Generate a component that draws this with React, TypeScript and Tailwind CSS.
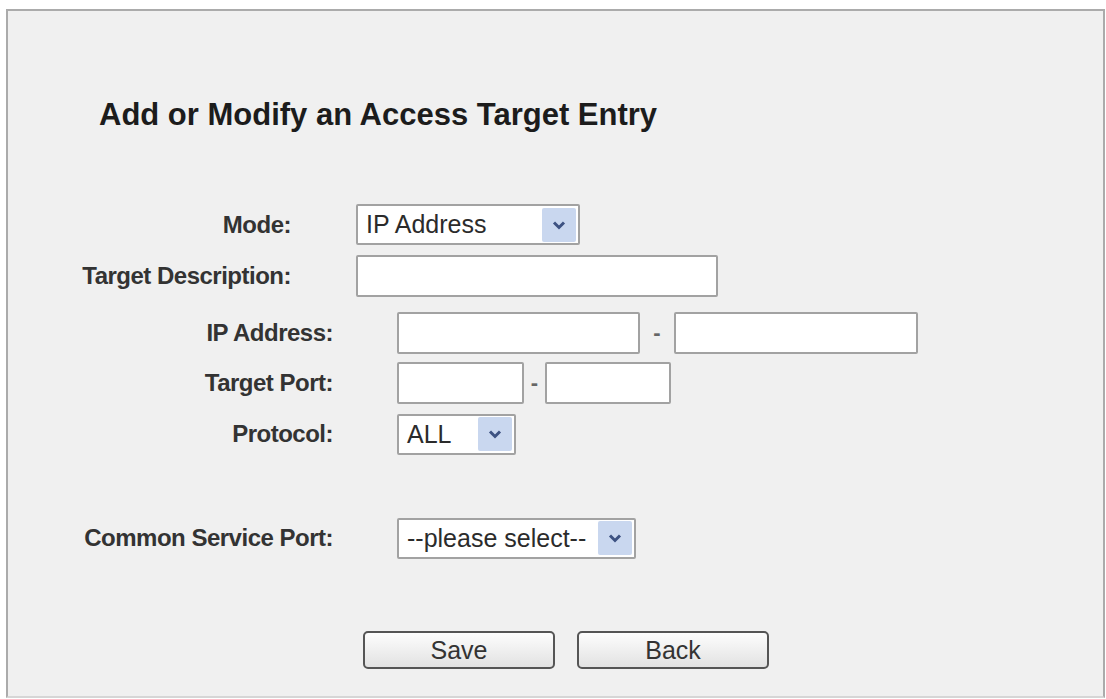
import * as React from "react";

const font = { fontFamily: '"Liberation Sans", Arial, sans-serif' };

function Chevron() {
  return (
    <svg width="14" height="10" viewBox="0 0 14 10">
      <path d="M2 2.5 L7 7.5 L12 2.5" fill="none" stroke="#3d5282" strokeWidth="3" />
    </svg>
  );
}

function Select({ value, width }: { value: string; width: string }) {
  return (
    <div
      className={`${width} h-[41px] flex items-center justify-between bg-white border-2 border-[#a2a2a2] rounded-[2px] pl-[8px] pr-[2px]`}
    >
      <span className="text-[25px] text-[#2b2b2b] leading-none">{value}</span>
      <span className="w-[34px] h-[34px] flex items-center justify-center bg-[#c9d7ef] rounded-[2px]">
        <Chevron />
      </span>
    </div>
  );
}

function TextBox({ width }: { width: string }) {
  return <div className={`${width} h-[42px] bg-white border-2 border-[#a2a2a2] rounded-[2px]`} />;
}

function Label({ text, width }: { text: string; width: string }) {
  return (
    <div className={`${width} text-right text-[24px] font-bold tracking-[-0.5px] text-[#333] leading-none`}>
      {text}
    </div>
  );
}

function Dash({ width }: { width: string }) {
  return <div className={`${width} text-center text-[22px] font-bold text-[#666] leading-none`}>-</div>;
}

function FormButton({ text }: { text: string }) {
  return (
    <button className="w-[192px] h-[38px] rounded-[5px] border-2 border-[#555] bg-gradient-to-b from-[#fdfdfd] to-[#e2e2e2] text-[25px] text-[#333] leading-none">
      {text}
    </button>
  );
}

export default function App() {
  return (
    <div className="w-[1106px] h-[699px] bg-white pt-[9px] pl-[6px] pr-[1px] pb-[1px]" style={font}>
      <div className="h-full border-2 border-[#ababab] border-b-[#d6d6d6] bg-[#f0f0f0]">
        {/* Heading */}
        <h1 className="mt-[86px] ml-[91px] text-[31px] leading-[36px] font-bold text-[#1c1c1c]">
          Add or Modify an Access Target Entry
        </h1>

        {/* Mode / description */}
        <div className="mt-[71px] flex items-center h-[41px]">
          <Label text="Mode:" width="w-[283px]" />
          <div className="ml-[65px]">
            <Select value="IP Address" width="w-[224px]" />
          </div>
        </div>
        <div className="mt-[10px] flex items-center h-[41px]">
          <Label text="Target Description:" width="w-[283px]" />
          <div className="ml-[65px]">
            <TextBox width="w-[362px]" />
          </div>
        </div>

        {/* Address / port / protocol */}
        <div className="mt-[16px] flex items-center h-[41px]">
          <Label text="IP Address:" width="w-[325px]" />
          <div className="ml-[64px] flex items-center">
            <TextBox width="w-[243px]" />
            <Dash width="w-[34px]" />
            <TextBox width="w-[244px]" />
          </div>
        </div>
        <div className="mt-[9px] flex items-center h-[41px]">
          <Label text="Target Port:" width="w-[325px]" />
          <div className="ml-[64px] flex items-center">
            <TextBox width="w-[127px]" />
            <Dash width="w-[21px]" />
            <TextBox width="w-[126px]" />
          </div>
        </div>
        <div className="mt-[10px] flex items-center h-[42px]">
          <Label text="Protocol:" width="w-[325px]" />
          <div className="ml-[64px]">
            <Select value="ALL" width="w-[119px]" />
          </div>
        </div>

        <div className="mt-[63px] flex items-center h-[40px]">
          <Label text="Common Service Port:" width="w-[325px]" />
          <div className="ml-[64px]">
            <Select value="--please select--" width="w-[239px]" />
          </div>
        </div>

        {/* Actions */}
        <div className="mt-[73px] ml-[355px] flex gap-[22px]">
          <FormButton text="Save" />
          <FormButton text="Back" />
        </div>
      </div>
    </div>
  );
}
